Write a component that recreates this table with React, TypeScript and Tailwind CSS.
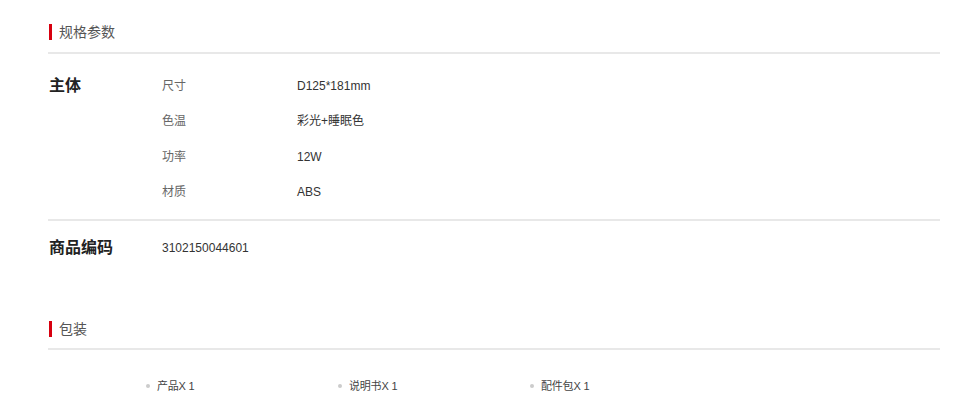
export default function App() {
  const specs = [
    { label: "尺寸", value: "D125*181mm" },
    { label: "色温", value: "彩光+睡眠色" },
    { label: "功率", value: "12W" },
    { label: "材质", value: "ABS" },
  ];
  const packing = ["产品X 1", "说明书X 1", "配件包X 1"];

  return (
    <div className="h-[404px] w-[960px] overflow-hidden bg-white font-['Liberation_Sans','Noto_Sans_CJK_SC',sans-serif]">
      <div className="ml-[48px] w-[892px]">
        {/* 规格参数 */}
        <div className="flex h-[54px] items-start border-b-2 border-[#e8e8e8] pt-[24px]">
          <span className="ml-px h-[16px] w-[3px] bg-[#d7000f]" />
          <span className="ml-[7px] text-[14px] leading-[16px] text-[#555]">规格参数</span>
        </div>

        <div className="flex border-b-2 border-[#e8e8e8] pt-[14px] pb-[9px]">
          <div className="w-[114px] pl-px text-[16px] font-bold leading-[35.5px] text-[#222]">主体</div>
          <div className="flex flex-col">
            {specs.map((s) => (
              <div key={s.label} className="flex h-[35.5px] items-center text-[12px]">
                <span className="w-[135px] text-[#666]">{s.label}</span>
                <span className="text-[#333]">{s.value}</span>
              </div>
            ))}
          </div>
        </div>

        <div className="flex pt-[9px]">
          <div className="w-[114px] pl-px text-[16px] font-bold leading-[35.5px] text-[#222]">商品编码</div>
          <div className="flex h-[35.5px] items-center text-[12px] text-[#333]">3102150044601</div>
        </div>

        {/* 包装 */}
        <div className="mt-[30px] flex h-[54px] items-start border-b-2 border-[#e8e8e8] pt-[25px]">
          <span className="ml-px h-[16px] w-[3px] bg-[#d7000f]" />
          <span className="ml-[7px] text-[14px] leading-[16px] text-[#555]">包装</span>
        </div>

        <div className="flex pl-[98px] pt-[28px]">
          {packing.map((p) => (
            <div key={p} className="flex w-[192px] items-center text-[11px] text-[#444]">
              <span className="h-[4px] w-[4px] rounded-full bg-[#ccc]" />
              <span className="ml-[7px] tracking-[-0.2px]">{p}</span>
            </div>
          ))}
        </div>
      </div>
    </div>
  );
}
